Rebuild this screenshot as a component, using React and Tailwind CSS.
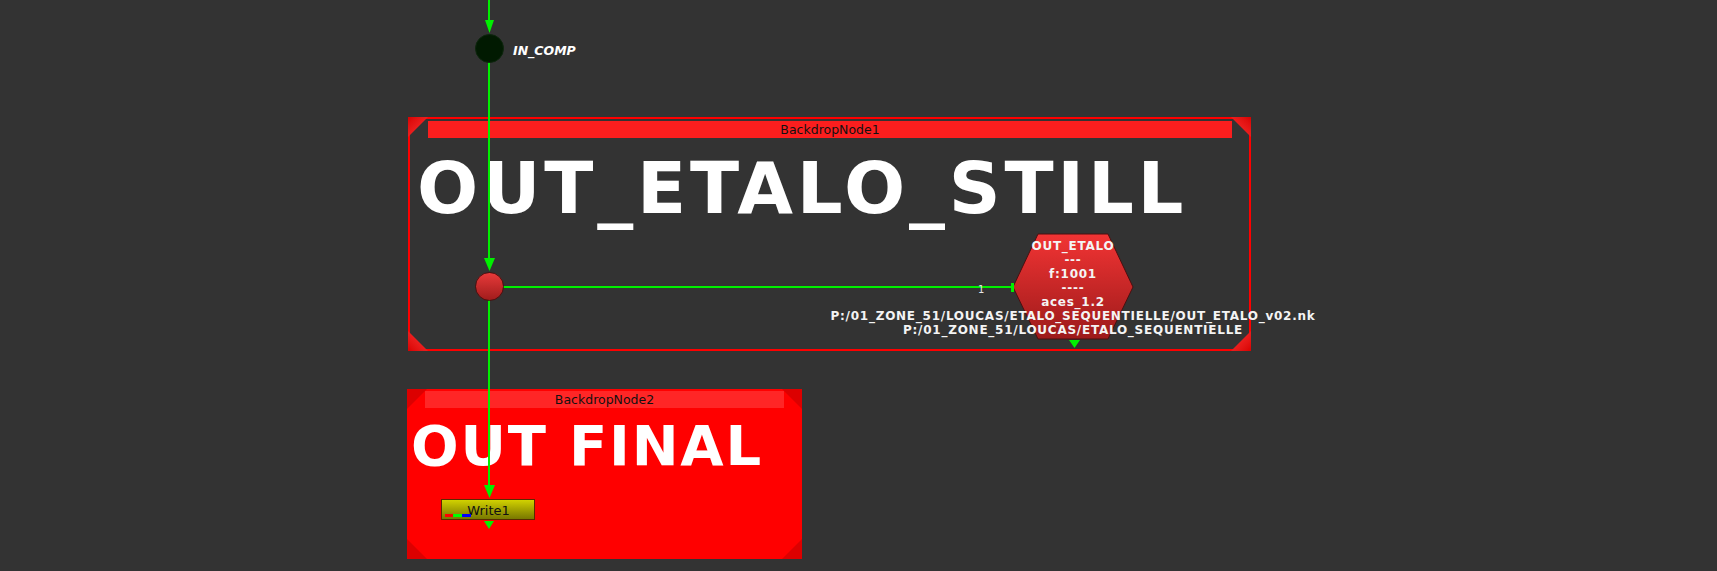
import React from 'react';

const GREEN = '#00f000';

// corner wedges used by backdrop nodes
const Corner = ({ pos, color }) => {
  const cls = {
    tl: 'top-0 left-0 [clip-path:polygon(0_0,100%_0,0_100%)]',
    tr: 'top-0 right-0 [clip-path:polygon(0_0,100%_0,100%_100%)]',
    bl: 'bottom-0 left-0 [clip-path:polygon(0_0,100%_100%,0_100%)]',
    br: 'bottom-0 right-0 [clip-path:polygon(100%_0,100%_100%,0_100%)]',
  }[pos];
  return <div className={`absolute w-[20px] h-[20px] ${color} ${cls}`} />;
};

const Backdrop1 = () => (
  <div className="absolute left-[408px] top-[117px] w-[843px] h-[234px]">
    <div className="absolute inset-0 border-2 border-[#ff0000]" />
    <Corner pos="tl" color="bg-gradient-to-br from-[#d80000] to-[#ff3030]" />
    <Corner pos="tr" color="bg-gradient-to-bl from-[#d80000] to-[#ff3030]" />
    <Corner pos="bl" color="bg-gradient-to-tr from-[#d80000] to-[#ff3030]" />
    <Corner pos="br" color="bg-gradient-to-tl from-[#d80000] to-[#ff3030]" />
    <div className="relative flex flex-col">
      <div className="ml-[20px] mt-[4px] w-[804px] h-[17px] bg-[#fb1e1e] flex items-center justify-center pt-[1px] text-[12.5px] text-[#111] leading-none">
        BackdropNode1
      </div>
      <div className="mt-[14px] ml-[9px] text-[72px] leading-none font-bold text-white tracking-[3.8px] whitespace-nowrap">
        OUT_ETALO_STILL
      </div>
    </div>
  </div>
);

const Backdrop2 = () => (
  <div className="absolute left-[407px] top-[389px] w-[395px] h-[170px] bg-[#ff0000]">
    <Corner pos="tl" color="bg-[#dc0000]" />
    <Corner pos="tr" color="bg-[#dc0000]" />
    <Corner pos="bl" color="bg-[#dc0000]" />
    <Corner pos="br" color="bg-[#dc0000]" />
    <div className="relative flex flex-col">
      <div className="ml-[18px] mt-[2px] w-[359px] h-[17px] bg-[#ff2626] flex items-center justify-center pt-[1px] text-[12.5px] text-[#111] leading-none">
        BackdropNode2
      </div>
      <div className="mt-[10px] ml-[4px] text-[56px] leading-none font-bold text-white tracking-[1.8px] whitespace-nowrap">
        OUT FINAL
      </div>
    </div>
  </div>
);

const Wires = () => (
  <svg className="absolute inset-0" width="1717" height="571">
    <g fill={GREEN} stroke="none">
      <rect x="488" y="0" width="2" height="22" />
      <polygon points="485,20 494,20 489.5,33" />
      <rect x="488" y="60" width="2" height="200" />
      <polygon points="484,258 495,258 489.5,271" />
      <rect x="488" y="299" width="2" height="188" />
      <polygon points="484,485 495,485 489.5,498" />
      <polygon points="484,521 494,521 489,529" />
      <rect x="500" y="286" width="512" height="2" />
      <rect x="1011" y="283" width="3" height="9" />
      <polygon points="1069,340 1080,340 1074.5,348" />
    </g>
    <text x="978" y="293" fill="#e6e6e6" fontSize="10" fontFamily="DejaVu Sans, sans-serif">1</text>
  </svg>
);

const Hexagon = () => (
  <svg className="absolute left-0 top-0" width="1717" height="571">
    <defs>
      <linearGradient id="hexFill" x1="0" y1="0" x2="0" y2="1">
        <stop offset="0" stopColor="#f23434" />
        <stop offset="1" stopColor="#9c1a1a" />
      </linearGradient>
    </defs>
    <polygon
      points="1038,234 1108,234 1133,287 1108,339 1038,339 1013,287"
      fill="url(#hexFill)"
      stroke="#4a1010"
      strokeWidth="1"
    />
  </svg>
);

const Dot = ({ top, className }) => (
  <div className={`absolute left-[475px] w-[29px] h-[29px] rounded-full border ${top} ${className}`} />
);

const WriteNode = () => (
  <div className="absolute left-[441px] top-[499px] w-[94px] h-[21px] border border-[#5a2a00] bg-gradient-to-b from-[#d2d200] to-[#787800] flex items-center justify-center">
    <span className="pl-[1px] pt-[2px] text-[13px] leading-none text-[#111]">Write1</span>
    <div className="absolute left-[3px] bottom-[2px] flex h-[3px]">
      <div className="w-[8px] bg-[#ff0000]" />
      <div className="w-[9px] bg-[#00ff00]" />
      <div className="w-[9px] bg-[#0000ff]" />
    </div>
  </div>
);

export default function App() {
  return (
    <div className="relative w-[1717px] h-[571px] overflow-hidden bg-[#333333] font-['DejaVu_Sans',sans-serif]">
      <Backdrop1 />
      <Backdrop2 />
      <Hexagon />
      <Wires />

      <Dot top="top-[34px]" className="bg-[#011a01] border-[#0c260c]" />
      <div className="absolute left-[513px] top-[45px] text-[12.5px] leading-none font-bold italic text-white">
        IN_COMP
      </div>

      <Dot top="top-[272px]" className="bg-gradient-to-b from-[#e83a3a] to-[#a11c1c] border-[#4a1010]" />

      <div className="absolute left-[673px] top-[239px] w-[800px] flex flex-col items-center text-[12px] leading-[14px] font-bold text-[#f4f4f4] whitespace-nowrap tracking-[0.75px]">
        <span>OUT_ETALO</span>
        <span>---</span>
        <span>f:1001</span>
        <span>----</span>
        <span>aces_1.2</span>
        <span>P:/01_ZONE_51/LOUCAS/ETALO_SEQUENTIELLE/OUT_ETALO_v02.nk</span>
        <span>P:/01_ZONE_51/LOUCAS/ETALO_SEQUENTIELLE</span>
      </div>

      <WriteNode />
    </div>
  );
}
